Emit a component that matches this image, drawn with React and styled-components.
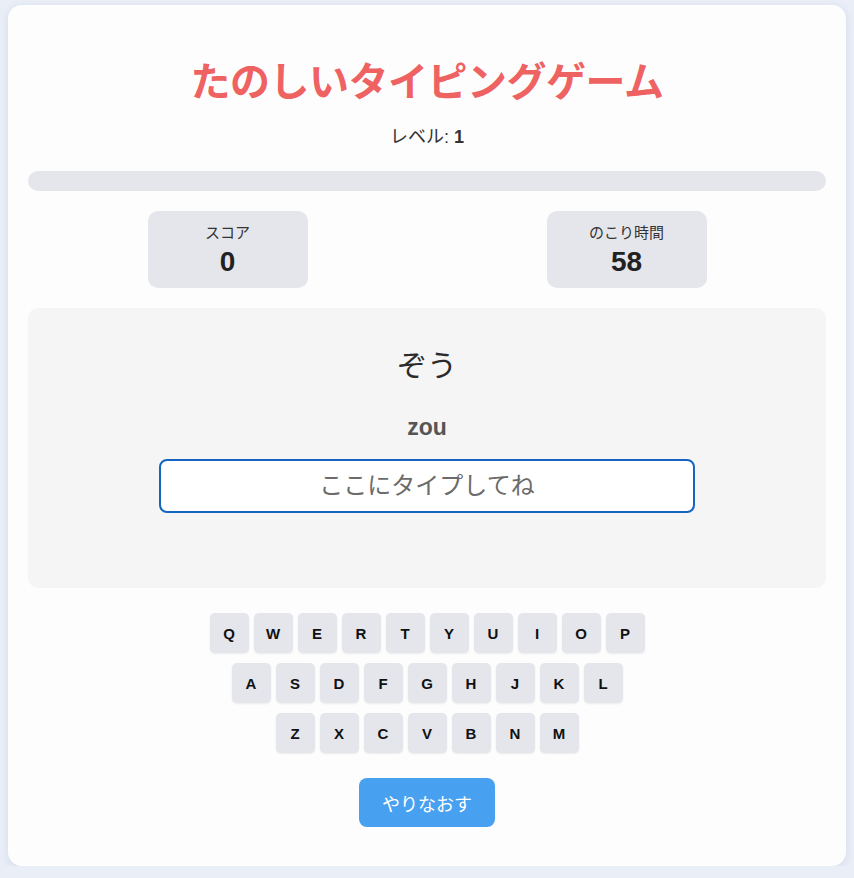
import styled, { createGlobalStyle } from "styled-components";
import { useState } from "react";

const GlobalStyle = createGlobalStyle`
  html, body {
    margin: 0;
    padding: 0;
    background: #e9eef7;
  }
  body {
    font-family: "Liberation Sans", "Noto Sans CJK JP", sans-serif;
    color: #333;
  }
`;

const Card = styled.div`
  margin: 5px 8px 0;
  padding: 20px 20px 39px;
  background: #fdfdfe;
  border-radius: 14px;
  box-shadow: 0 2px 8px rgba(120, 140, 170, 0.18);
  display: flex;
  flex-direction: column;
  align-items: center;
`;

const Title = styled.h1`
  margin: 33px 0 0;
  font-size: 40px;
  line-height: 48px;
  font-weight: 700;
  color: #ef6262;
  letter-spacing: -0.5px;
`;

const Level = styled.div`
  margin-top: 19px;
  font-size: 18px;
  line-height: 24px;
  color: #333;
  b {
    font-weight: 700;
  }
`;

const Bar = styled.div`
  margin-top: 22px;
  width: 100%;
  height: 20px;
  border-radius: 10px;
  background: #e4e6eb;
  overflow: hidden;
`;

const BarFill = styled.div`
  height: 100%;
  background: #4aa0f0;
`;

const StatsRow = styled.div`
  margin-top: 20px;
  width: 100%;
  display: flex;
  justify-content: space-around;
`;

const StatBox = styled.div`
  width: 160px;
  height: 77px;
  box-sizing: border-box;
  padding-top: 12px;
  border-radius: 10px;
  background: #e4e6eb;
  text-align: center;
`;

const StatLabel = styled.div`
  font-size: 15px;
  line-height: 20px;
  color: #333;
`;

const StatValue = styled.div`
  margin-top: 3px;
  font-size: 28px;
  line-height: 32px;
  font-weight: 700;
  color: #222;
`;

const GameArea = styled.div`
  margin-top: 20px;
  width: 100%;
  height: 280px;
  box-sizing: border-box;
  padding-top: 38px;
  border-radius: 10px;
  background: #f5f5f6;
  display: flex;
  flex-direction: column;
  align-items: center;
`;

const Word = styled.div`
  font-size: 30px;
  line-height: 40px;
  color: #2b2b2b;
`;

const Romaji = styled.div`
  margin-top: 26px;
  font-size: 23px;
  line-height: 30px;
  font-weight: 700;
  color: #555;
`;

const TypeInput = styled.input`
  margin-top: 17px;
  width: 536px;
  height: 54px;
  box-sizing: border-box;
  border: 2px solid #1565c0;
  border-radius: 8px;
  background: #fff;
  font-family: inherit;
  font-size: 24px;
  text-align: center;
  color: #333;
  outline: none;
  &::placeholder {
    color: #6b6b6b;
  }
`;

const Keyboard = styled.div`
  margin-top: 25px;
  display: flex;
  flex-direction: column;
  align-items: center;
  gap: 10px;
`;

const KeyRow = styled.div`
  display: flex;
  gap: 5px;
`;

const Key = styled.div`
  width: 39px;
  height: 40px;
  border-radius: 5px;
  background: #e4e6eb;
  box-shadow: 0 1px 2px rgba(0, 0, 0, 0.08);
  display: flex;
  align-items: center;
  justify-content: center;
  font-size: 15px;
  font-weight: 700;
  color: #111;
`;

const RetryBtn = styled.button`
  margin-top: 25px;
  width: 136px;
  height: 49px;
  border: none;
  border-radius: 8px;
  background: #48a0f0;
  color: #fff;
  font-family: inherit;
  font-size: 18px;
  cursor: pointer;
`;

const rows = ["QWERTYUIOP", "ASDFGHJKL", "ZXCVBNM"];

const App = () => {
  const [typed, setTyped] = useState("");
  const progress = 0;

  return (
    <>
      <GlobalStyle />
      <Card>
        <Title>たのしいタイピングゲーム</Title>
        <Level>
          レベル: <b>1</b>
        </Level>
        <Bar>
          <BarFill style={{ width: `${progress}%` }} />
        </Bar>
        <StatsRow>
          <StatBox>
            <StatLabel>スコア</StatLabel>
            <StatValue>0</StatValue>
          </StatBox>
          <StatBox>
            <StatLabel>のこり時間</StatLabel>
            <StatValue>58</StatValue>
          </StatBox>
        </StatsRow>
        <GameArea>
          <Word>ぞう</Word>
          <Romaji>zou</Romaji>
          <TypeInput
            value={typed}
            onChange={(e) => setTyped(e.target.value)}
            placeholder="ここにタイプしてね"
          />
        </GameArea>
        <Keyboard>
          {rows.map((row) => (
            <KeyRow key={row}>
              {row.split("").map((k) => (
                <Key key={k}>{k}</Key>
              ))}
            </KeyRow>
          ))}
        </Keyboard>
        <RetryBtn onClick={() => setTyped("")}>やりなおす</RetryBtn>
      </Card>
    </>
  );
};

export default App;
